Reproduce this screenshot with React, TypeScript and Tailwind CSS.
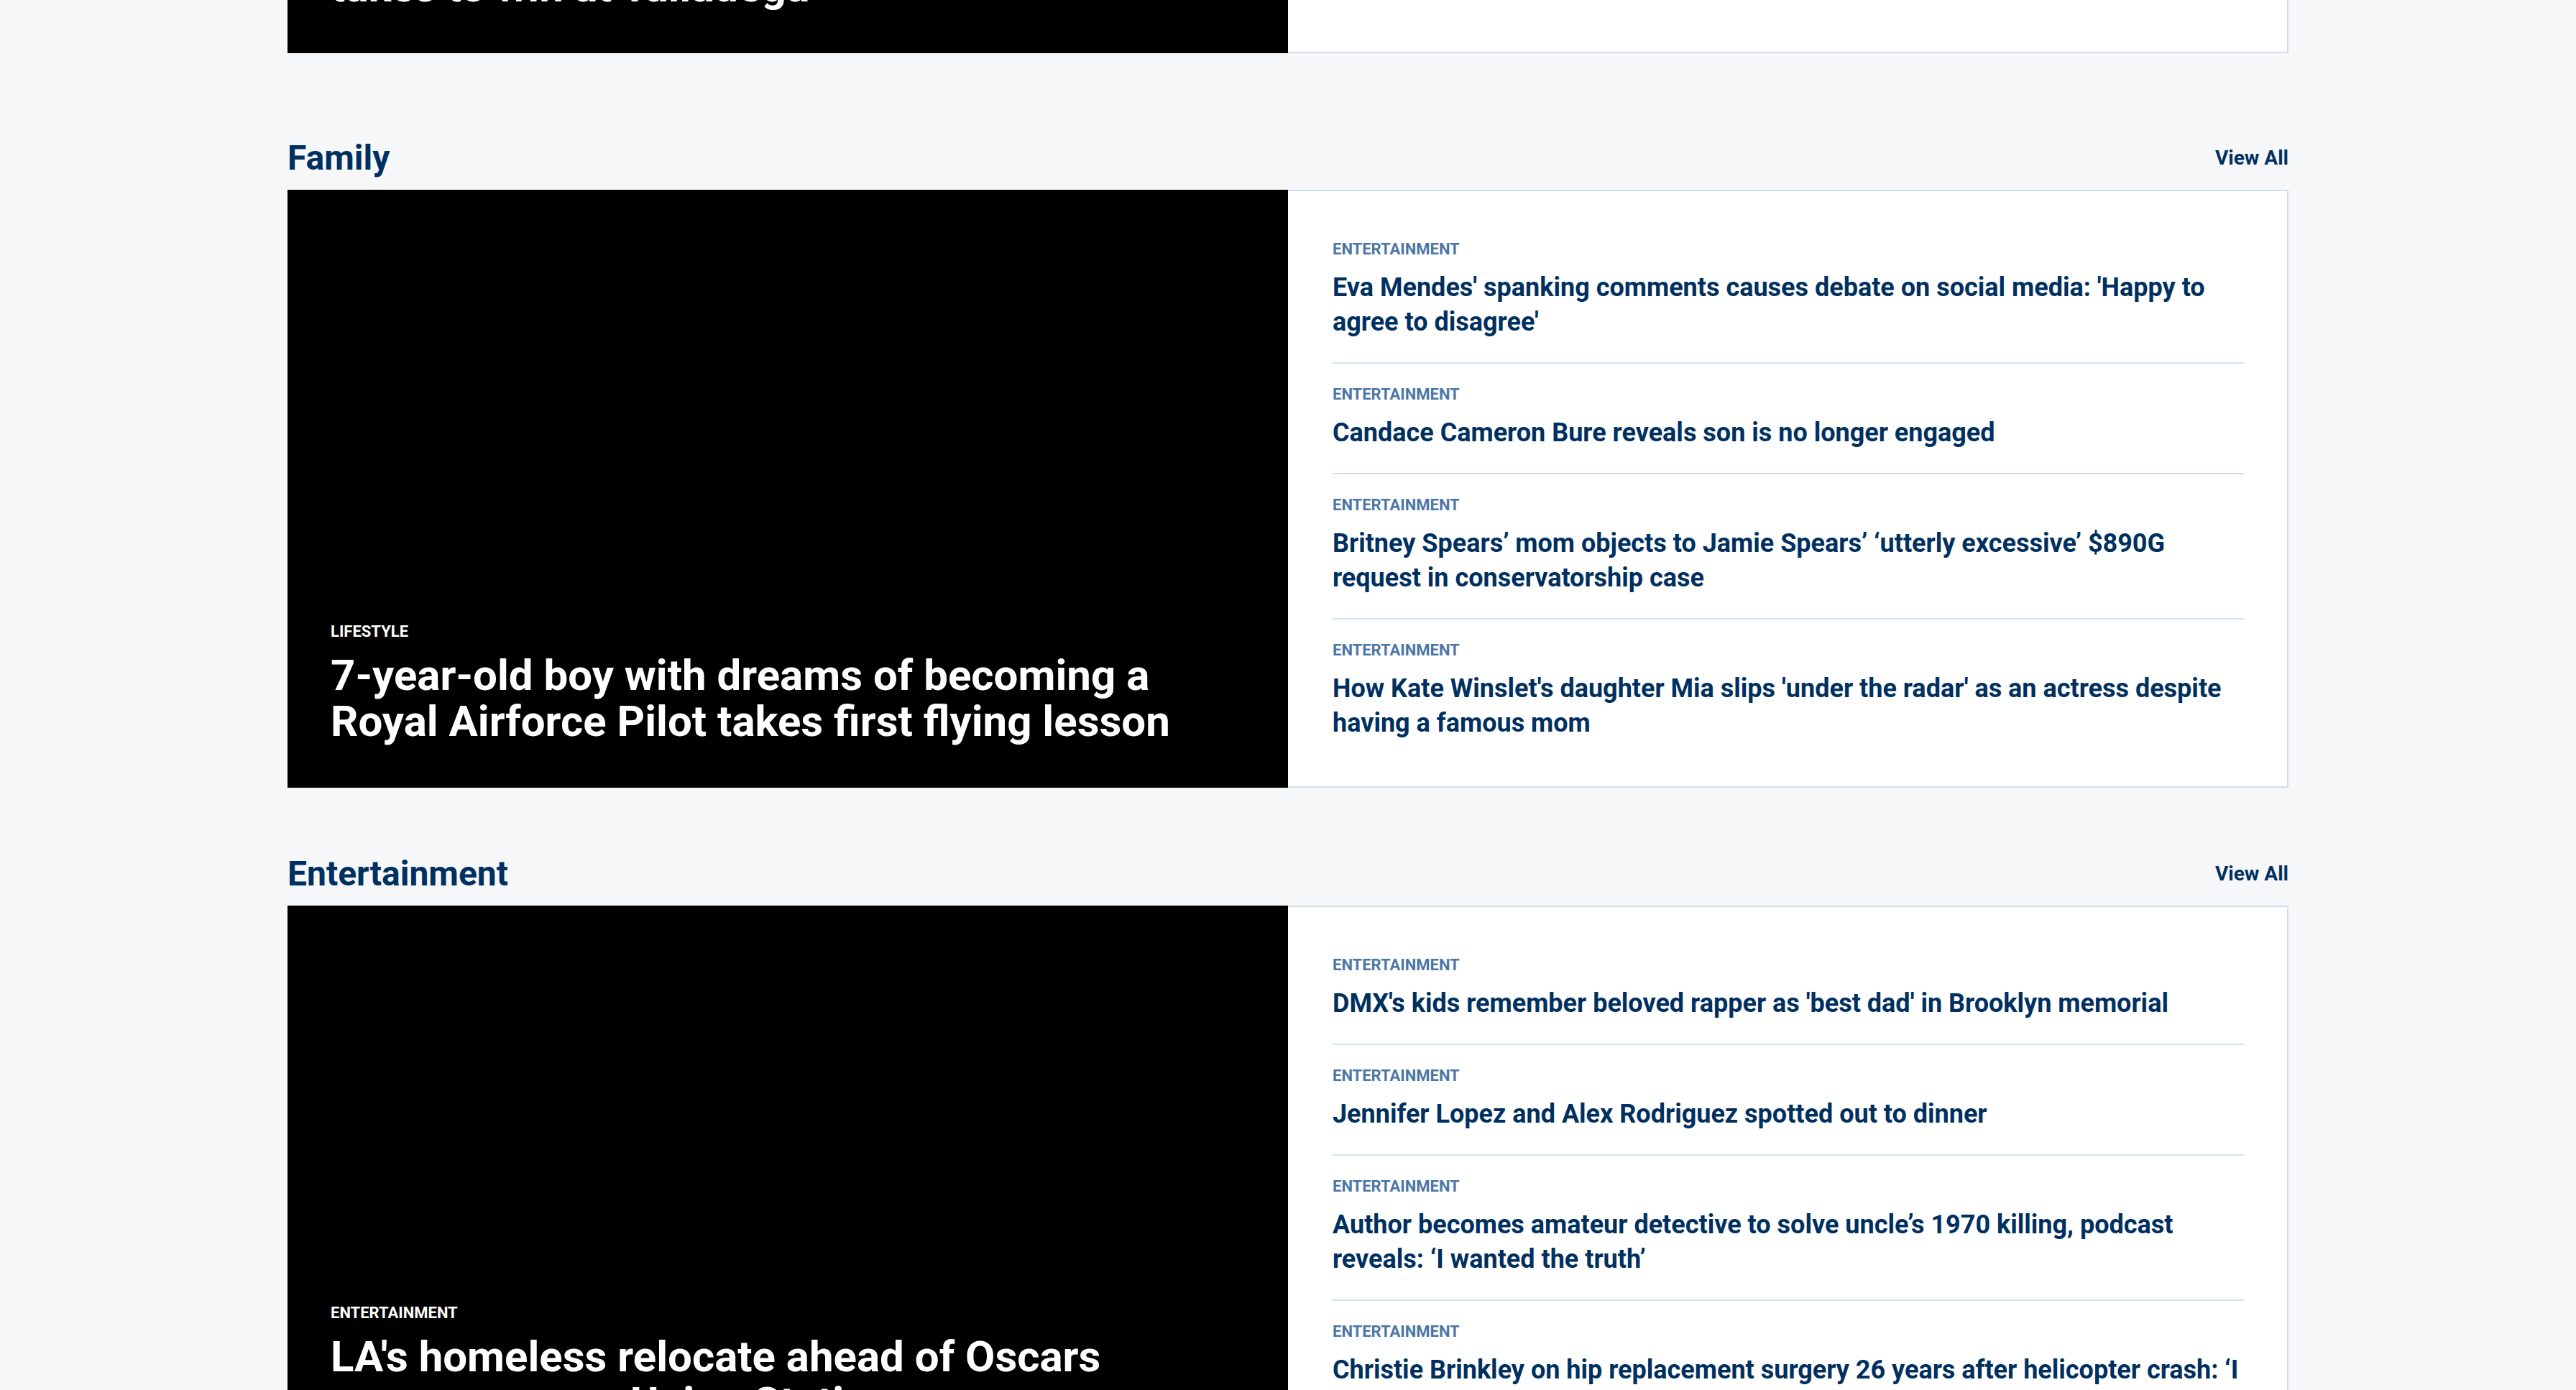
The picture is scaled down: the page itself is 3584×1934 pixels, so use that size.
type Story = { category: string; title: string };

type Section = {
  name: string;
  lead: Story;
  stories: Story[];
};

const sections: Section[] = [
  {
    name: "Family",
    lead: {
      category: "Lifestyle",
      title: "7-year-old boy with dreams of becoming a Royal Airforce Pilot takes first flying lesson",
    },
    stories: [
      { category: "Entertainment", title: "Eva Mendes' spanking comments causes debate on social media: 'Happy to agree to disagree'" },
      { category: "Entertainment", title: "Candace Cameron Bure reveals son is no longer engaged" },
      { category: "Entertainment", title: "Britney Spears’ mom objects to Jamie Spears’ ‘utterly excessive’ $890G request in conservatorship case" },
      { category: "Entertainment", title: "How Kate Winslet's daughter Mia slips 'under the radar' as an actress despite having a famous mom" },
    ],
  },
  {
    name: "Entertainment",
    lead: {
      category: "Entertainment",
      title: "LA's homeless relocate ahead of Oscars ceremony near Union Station",
    },
    stories: [
      { category: "Entertainment", title: "DMX's kids remember beloved rapper as 'best dad' in Brooklyn memorial" },
      { category: "Entertainment", title: "Jennifer Lopez and Alex Rodriguez spotted out to dinner" },
      { category: "Entertainment", title: "Author becomes amateur detective to solve uncle’s 1970 killing, podcast reveals: ‘I wanted the truth’" },
      { category: "Entertainment", title: "Christie Brinkley on hip replacement surgery 26 years after helicopter crash: ‘I was in constant pain’" },
    ],
  },
];

function LeadCard({ story }: { story: Story }) {
  return (
    <div className="w-[1392px] shrink-0 min-h-[783px] bg-black flex flex-col justify-end px-[60px] pb-[60px]">
      <span className="text-[22px] leading-[26px] font-bold uppercase text-white mb-4">{story.category}</span>
      <h3 className="text-[60px] leading-[64px] font-bold text-white">{story.title}</h3>
    </div>
  );
}

function StoryList({ stories }: { stories: Story[] }) {
  return (
    <div className="flex-1 bg-white border-2 border-l-0 border-[#cfdeed] pl-[62px] pr-[60px] pt-[38px] pb-[32px]">
      {stories.map((s, i) => (
        <a
          key={i}
          href="#"
          className={
            "flex flex-col pt-[30px] pb-8 " + (i < stories.length - 1 ? "border-b-2 border-[#d2e0ee]" : "")
          }
        >
          <span className="text-[22px] leading-[26px] font-bold uppercase text-[#4b76a6] mb-4">{s.category}</span>
          <span className="text-[36px] leading-[48px] font-bold text-[#00305f]">{s.title}</span>
        </a>
      ))}
    </div>
  );
}

function NewsSection({ section }: { section: Section }) {
  return (
    <section className="mb-[92px]">
      <div className="flex items-center justify-between mb-4">
        <h2 className="text-[48px] leading-[56px] font-bold text-[#00305f]">{section.name}</h2>
        <a href="#" className="text-[28px] leading-[32px] font-bold text-[#00305f]">
          View All
        </a>
      </div>
      <div className="flex">
        <LeadCard story={section.lead} />
        <StoryList stories={section.stories} />
      </div>
    </section>
  );
}

export default function App() {
  return (
    <div className="min-h-screen bg-[#f6f7f9] font-[Roboto,'Liberation_Sans',sans-serif]">
      <div className="w-[2784px] mx-auto">
        {/* tail end of the previous section, scrolled mostly out of view */}
        <div className="flex h-[74px] overflow-hidden mb-[118px]">
          <div className="w-[1392px] shrink-0 bg-black flex flex-col justify-end px-[60px] pb-[60px]">
            <h3 className="text-[60px] leading-[64px] font-bold text-white whitespace-nowrap">
              takes to win at Talladega
            </h3>
          </div>
          <div className="flex-1 bg-white border-2 border-l-0 border-t-0 border-[#cfdeed]" />
        </div>

        {sections.map((s) => (
          <NewsSection key={s.name} section={s} />
        ))}
      </div>
    </div>
  );
}
